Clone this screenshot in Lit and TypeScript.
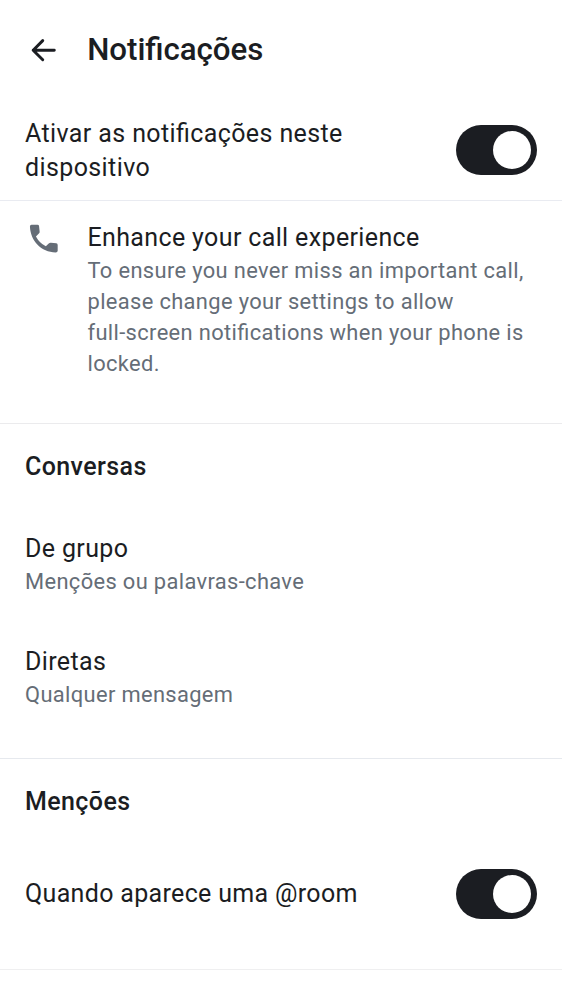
import { LitElement, html, css } from "lit";
import { customElement, property } from "lit/decorators.js";

@customElement("toggle-switch")
class ToggleSwitch extends LitElement {
  static styles = css`
    :host { display: block; flex: none; width: 81px; height: 50px; }
    .track { box-sizing: border-box; display: flex; justify-content: flex-end; align-items: center; width: 81px; height: 50px; padding: 0 6px; border-radius: 25px; background: #1b1d22; }
    .thumb { width: 38px; height: 38px; border-radius: 50%; background: #fff; }
  `;
  render() {
    return html`<div class="track" role="switch" aria-checked="true"><div class="thumb"></div></div>`;
  }
}

@customElement("setting-item")
class SettingItem extends LitElement {
  @property() heading = "";
  @property() detail = "";
  static styles = css`
    :host { display: block; }
    .title { font-size: 25px; line-height: 34px; letter-spacing: 0.36px; color: #1b1d22; }
    .detail { font-size: 21.875px; line-height: 31.25px; letter-spacing: 0.36px; color: #656d77; white-space: pre; }
  `;
  render() {
    return html`<div class="title">${this.heading}</div><div class="detail">${this.detail}</div>`;
  }
}

@customElement("app-root")
class AppRoot extends LitElement {
  static styles = css`
    :host { display: block; height: 1000px; overflow: hidden; background: #fff; color: #1b1d22; font-family: Roboto, sans-serif; font-feature-settings: "liga" 1; }
    .bar { box-sizing: border-box; display: flex; align-items: center; height: 100px; padding-left: 25px; }
    .back { width: 37px; height: 37px; margin-right: 25.2px; }
    h1 { margin: 0; font-size: 31.25px; font-weight: 500; line-height: 40px; letter-spacing: -0.04px; }
    .row { box-sizing: border-box; display: flex; justify-content: space-between; align-items: center; padding: 0 25px; }
    .enable { height: 101px; border-bottom: 1px solid #e9ebf1; }
    .label { width: 345px; font-size: 25px; line-height: 34px; letter-spacing: 0.36px; }
    .enable .label { padding-top: 1px; letter-spacing: 0.39px; }
    .call { box-sizing: border-box; display: flex; height: 223px; padding: 19.5px 0 0 25px; border-bottom: 1px solid #ebebed; }
    .phone { flex: none; width: 37px; height: 37px; margin: -1px 25.5px 0 0; }
    h2 { margin: 0; font-size: 25px; font-weight: 500; line-height: 38px; letter-spacing: 0.4px; }
    .chats { box-sizing: border-box; height: 335px; padding: 24px 25px 0; border-bottom: 1px solid #e6e9ee; }
    .list { display: grid; gap: 47.25px; padding-top: 46px; }
    .mentions { box-sizing: border-box; height: 211px; padding-top: 24px; border-bottom: 1px solid #efeff0; }
    .mentions h2 { padding-left: 25px; }
    .room { height: 50px; margin-top: 48px; }
    .room .label { letter-spacing: 0.33px; }
  `;
  render() {
    return html`
      <header class="bar">
        <svg class="back" viewBox="0 0 24 24" fill="none" stroke="#1b1d22" stroke-width="1.9" stroke-linecap="round" stroke-linejoin="round"><path d="M19 11.800H5.300M11.500 5.600 5.300 11.800l6.200 6.200"/></svg>
        <h1>Notificações</h1>
      </header>
      <section class="row enable">
        <div class="label">Ativar as notificações neste dispositivo</div>
        <toggle-switch></toggle-switch>
      </section>
      <section class="call">
        <svg class="phone" viewBox="0 0 24 24" fill="#656d77"><path d="M20.300 15.100 16.800 14.700q-.8-.1-1.400.5l-1.900 1.900Q9.300 14.900 7.100 10.700L9 8.800q.6-.6.5-1.400L9.100 3.900Q9 3.100 8.100 3.100H4.200Q3.200 3.100 3.200 4.200C3.600 13.700 10.500 20.700 19.900 21.100Q21.200 21.100 21.200 20V16.200q0-1-.9-1.100Z"/></svg>
        <setting-item heading="Enhance your call experience" .detail=${"To ensure you never miss an important call,\nplease change your settings to allow\nfull-screen notifications when your phone is\nlocked."}></setting-item>
      </section>
      <section class="chats">
        <h2>Conversas</h2>
        <div class="list">
          <setting-item heading="De grupo" detail="Menções ou palavras-chave"></setting-item>
          <setting-item heading="Diretas" detail="Qualquer mensagem"></setting-item>
        </div>
      </section>
      <section class="mentions">
        <h2>Menções</h2>
        <div class="row room"><div class="label">Quando aparece uma @room</div><toggle-switch></toggle-switch></div>
      </section>
    `;
  }
}
